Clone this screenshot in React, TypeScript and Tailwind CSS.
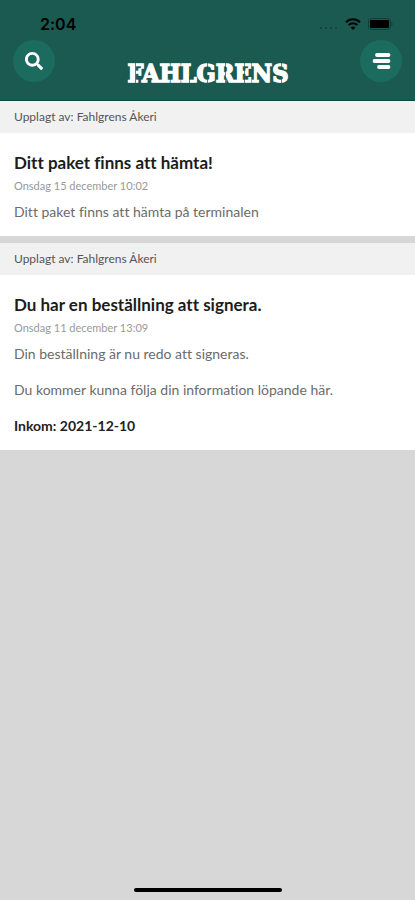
import type { ReactNode } from "react";
import { FaSearch } from "react-icons/fa";

type Post = {
  author: string;
  title: string;
  date: string;
  body: ReactNode;
};

const POSTS: Post[] = [
  {
    author: "Fahlgrens Åkeri",
    title: "Ditt paket finns att hämta!",
    date: "Onsdag 15 december 10:02",
    body: <p>Ditt paket finns att hämta på terminalen</p>,
  },
  {
    author: "Fahlgrens Åkeri",
    title: "Du har en beställning att signera.",
    date: "Onsdag 11 december 13:09",
    body: (
      <>
        <p>Din beställning är nu redo att signeras.</p>
        <p>Du kommer kunna följa din information löpande här.</p>
        <p className="font-bold text-[#222222]">Inkom: 2021-12-10</p>
      </>
    ),
  },
];

function StatusBar() {
  return (
    <div className="flex h-10 items-center justify-between pt-[7px] pr-[22px] pl-10 text-black">
      <span className="font-[Inter,sans-serif] text-base font-semibold">2:04</span>
      <div className="flex items-center gap-[7px]">
        <svg width="18" height="12" viewBox="0 0 18 12" className="opacity-30" aria-hidden="true">
          <g fill="currentColor">
            <circle cx="1" cy="10" r="1" />
            <circle cx="6" cy="10" r="1" />
            <circle cx="11" cy="10" r="1" />
            <circle cx="16" cy="10" r="1" />
          </g>
        </svg>
        <svg width="16" height="12" viewBox="0 0 16 12" fill="none" aria-hidden="true">
          <path d="M1 4.2C5 .2 11 .2 15 4.2M3.6 7c2.5-2.5 6.3-2.5 8.8 0" stroke="currentColor" strokeWidth="2" />
          <path d="M8 12 5.6 9.500c1.4-1.3 3.4-1.3 4.8 0z" fill="currentColor" />
        </svg>
        <svg width="25" height="12" viewBox="0 0 25 12" aria-hidden="true">
          <rect x=".5" y=".5" width="22" height="11" rx="3" fill="none" stroke="currentColor" opacity=".3" />
          <rect x="2" y="2" width="19" height="8" rx="1" fill="currentColor" />
          <path d="M23.5 4c1.300.6 1.300 3.400 0 4z" fill="currentColor" opacity=".4" />
        </svg>
      </div>
    </div>
  );
}

function Logo() {
  return (
    <svg width="168" height="32" viewBox="0 0 168 32" role="img" aria-label="Fahlgrens">
      <text
        x="84"
        y="26"
        textAnchor="middle"
        className="fill-white stroke-white font-['DejaVu_Serif_Condensed','DejaVu_Serif',serif] text-[25px] font-bold"
        strokeWidth="1.4"
      >
        FAHLGRENS
      </text>
      {/* stencil cuts */}
      <path
        d="M11.5 6v21M65.500 20v7M83.500 6v5M83.500 22v5M101.500 6v21M120.500 6v21M157.500 6v5M157.500 22v5"
        stroke="#1b5a50"
        strokeOpacity="0.7"
      />
    </svg>
  );
}

function Header() {
  return (
    <header className="border-b border-[#0d4a40] bg-[#1b5a50]">
      <StatusBar />
      <div className="flex h-15 items-start justify-between px-[13px]">
        <button
          type="button"
          aria-label="Sök"
          className="flex size-[42px] items-center justify-center rounded-full bg-[#1b6c5e] text-white"
        >
          <FaSearch className="size-[18px]" />
        </button>
        <div className="pt-4">
          <Logo />
        </div>
        <button
          type="button"
          aria-label="Meny"
          className="flex size-[42px] items-center justify-center rounded-full bg-[#1b6c5e] text-white"
        >
          <svg width="20" height="18" viewBox="0 0 20 18" aria-hidden="true">
            <path
              d="M6 3h11.500M3.500 9h14M8 15h9.500"
              stroke="currentColor"
              strokeWidth="3.8"
              strokeLinecap="round"
            />
          </svg>
        </button>
      </div>
    </header>
  );
}

function PostCard({ post }: { post: Post }) {
  return (
    <article className="bg-white">
      <p className="bg-[#f1f1f1] px-3.5 py-2 text-xs leading-4 text-[#555555]">
        Upplagt av: {post.author}
      </p>
      <div className="px-3.5 pt-[18px] pb-3.5">
        <h2 className="text-[17px] leading-6 font-bold text-[#1c1c1c]">{post.title}</h2>
        <p className="mt-[3px] text-[11px] leading-4 text-[#999999]">{post.date}</p>
        <div className="mt-2 space-y-4 text-sm leading-5 text-[#6b6b6b]">{post.body}</div>
      </div>
    </article>
  );
}

export default function App() {
  return (
    <div className="flex min-h-screen flex-col bg-[#d7d7d7] font-[Lato,sans-serif] [font-variant-ligatures:none]">
      <Header />
      <main className="flex flex-col gap-[7px]">
        {POSTS.map((post) => (
          <PostCard key={post.date} post={post} />
        ))}
      </main>
      <div className="mt-auto flex justify-center pt-8 pb-2">
        <div className="h-1 w-37 rounded-full bg-black" />
      </div>
    </div>
  );
}
